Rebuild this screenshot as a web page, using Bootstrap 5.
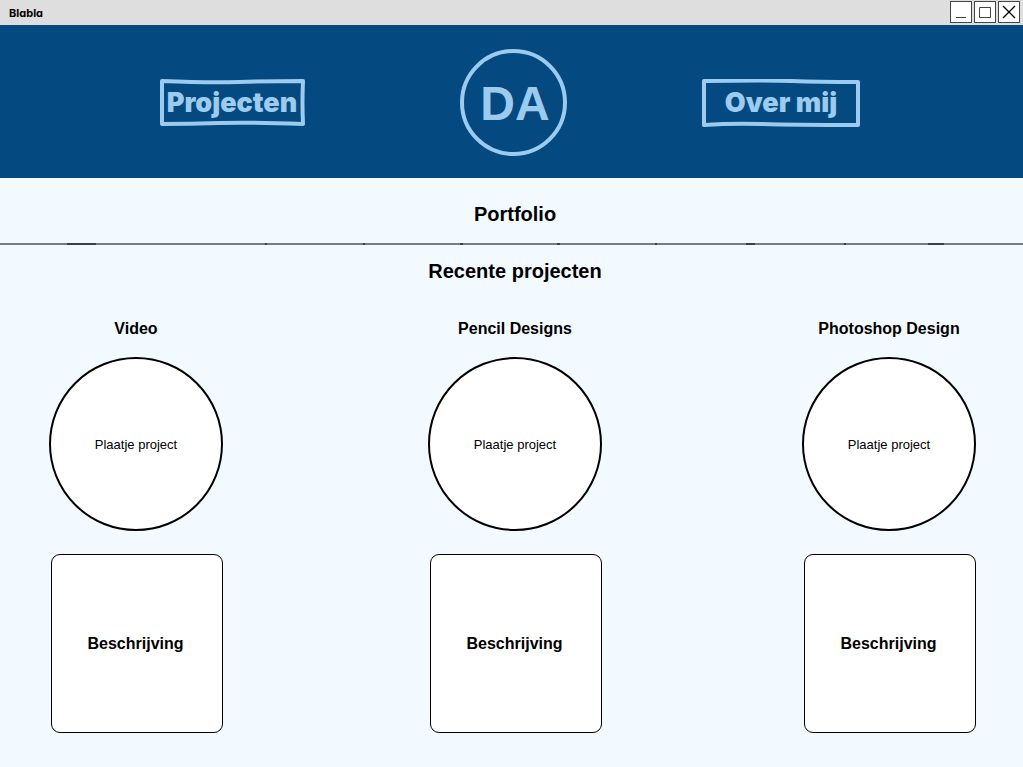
<!DOCTYPE html>
<html lang="nl">
<head>
<meta charset="utf-8">
<meta name="viewport" content="width=device-width, initial-scale=1">
<title>Blabla</title>
<link href="https://cdn.jsdelivr.net/npm/bootstrap@5.3.0/dist/css/bootstrap.min.css" rel="stylesheet">
<style>
  body { background: #f2f9ff; color: #000; font-family: "Liberation Sans", Arial, sans-serif; }
  .titlebar { background: #dedede; height: 25px; padding: 0 3px 0 9px; }
  .titlebar-name { font: 700 11px/26px Inter, sans-serif; font-feature-settings: "cv11"; }
  .window-controls { gap: 2px; height: 24px; }
  .window-btn { width: 22px; height: 22px; background: #fff; border: 1px solid #444; }
  .site-header { background: #044a80; color: #9dcbef; display: grid; grid-template-columns: 1fr auto 1fr; padding: 24px 0 22px 4px; }
  .logo-link { width: 107px; height: 107px; border: 4px solid #9dcbef; font-size: 48px; color: #9dcbef; padding: 2px 0 0 3px; }
  .menu-link { height: 48px; font: 900 27px/48px Inter, sans-serif; color: #9dcbef; }
  .menu-projects { width: 146px; margin-right: 155px; }
  .menu-about { width: 158px; margin-left: 135px; }
  .sketch-frame { fill: none; stroke: #9dcbef; stroke-width: 4; stroke-linejoin: round; }
  .section-title { font-size: 20px; line-height: 24px; padding-left: 7px; }
  .intro { padding: 24px 0 17px; }
  .sketch-rule { height: 2px; }
  .recent-title { padding-top: 14px; margin-bottom: 34px; }
  .projects { display: grid; grid-template-columns: 379fr 374fr 174px; padding: 0 47px 34px 49px; }
  .project { width: 174px; }
  .project-title, .project-text { font-size: 16px; line-height: 24px; }
  .project-title { margin-bottom: 16px; }
  .project-image { width: 174px; height: 174px; border: 2px solid #000; font-size: 13px; margin-bottom: 23px; padding-top: 2px; }
  .project-text { width: 172px; height: 179px; border: 1px solid #000; border-radius: 9px; padding-right: 3px; }
</style>
</head>
<body>
<div class="titlebar d-flex justify-content-between">
  <span class="titlebar-name">Blabla</span>
  <div class="window-controls d-flex align-items-center">
    <button type="button" class="window-btn p-0 d-flex" aria-label="Minimaliseren"><svg width="20" height="20" fill="none" stroke="#444"><path d="M5 15.5h10"/></svg></button>
    <button type="button" class="window-btn p-0 d-flex" aria-label="Maximaliseren"><svg width="20" height="20" fill="none" stroke="#444"><path d="M4.500 5.500h11v10h-11z"/></svg></button>
    <button type="button" class="window-btn p-0 d-flex" aria-label="Sluiten"><svg width="20" height="20" fill="none" stroke="#000" stroke-width="1.300"><path d="M4 4l12 12M16 4L4 16"/></svg></button>
  </div>
</div>

<header class="site-header align-items-center">
  <a href="#projecten" class="menu-link menu-projects position-relative text-decoration-none text-center ms-auto">
    <svg class="sketch-frame position-absolute top-0 start-0 w-100 h-100" viewBox="0 0 146 48" preserveAspectRatio="none" aria-hidden="true"><path d="M3 2Q50 4 80 3T144 2Q143 24 144 45Q90 43 60 44T3 45Z"/></svg>
    Projecten
  </a>
  <a href="#top" class="logo-link rounded-circle d-flex align-items-center justify-content-center fw-bold text-decoration-none">DA</a>
  <a href="#over" class="menu-link menu-about position-relative text-decoration-none text-center">
    <svg class="sketch-frame position-absolute top-0 start-0 w-100 h-100" viewBox="0 0 158 48" preserveAspectRatio="none" aria-hidden="true"><path d="M2 2Q65 1 90 2T156 3L156 46Q90 46 60 45T2 46Z"/></svg>
    Over mij
  </a>
</header>

<main>
  <div class="intro">
    <h1 class="section-title fw-bold text-center m-0">Portfolio</h1>
  </div>
  <svg class="sketch-rule d-block w-100" viewBox="0 0 1023 2" preserveAspectRatio="none" aria-hidden="true">
    <path fill="#787e80" d="M0 0h1023v2H0z"/>
    <path fill="#3a4143" d="M67 0h29v2h-29zM265 0h2v2h-2zM363 0h2v2h-2zM460 0h3v2h-3zM557 0h3v2h-3zM655 0h2v2h-2zM746 0h9v2h-9zM844 0h2v2h-2zM928 0h16v2h-16z"/>
  </svg>
  <h2 id="projecten" class="section-title recent-title fw-bold text-center">Recente projecten</h2>
  <div class="projects">
    <article class="project">
      <h3 class="project-title fw-bold text-center">Video</h3>
      <div class="project-image bg-white rounded-circle d-flex align-items-center justify-content-center">Plaatje project</div>
      <div class="project-text bg-white fw-bold ms-auto d-flex align-items-center justify-content-center">Beschrijving</div>
    </article>
    <article class="project">
      <h3 class="project-title fw-bold text-center">Pencil Designs</h3>
      <div class="project-image bg-white rounded-circle d-flex align-items-center justify-content-center">Plaatje project</div>
      <div class="project-text bg-white fw-bold ms-auto d-flex align-items-center justify-content-center">Beschrijving</div>
    </article>
    <article class="project">
      <h3 class="project-title fw-bold text-center">Photoshop Design</h3>
      <div class="project-image bg-white rounded-circle d-flex align-items-center justify-content-center">Plaatje project</div>
      <div class="project-text bg-white fw-bold ms-auto d-flex align-items-center justify-content-center">Beschrijving</div>
    </article>
  </div>
</main>
<script src="https://cdn.jsdelivr.net/npm/bootstrap@5.3.0/dist/js/bootstrap.bundle.min.js"></script>
</body>
</html>
